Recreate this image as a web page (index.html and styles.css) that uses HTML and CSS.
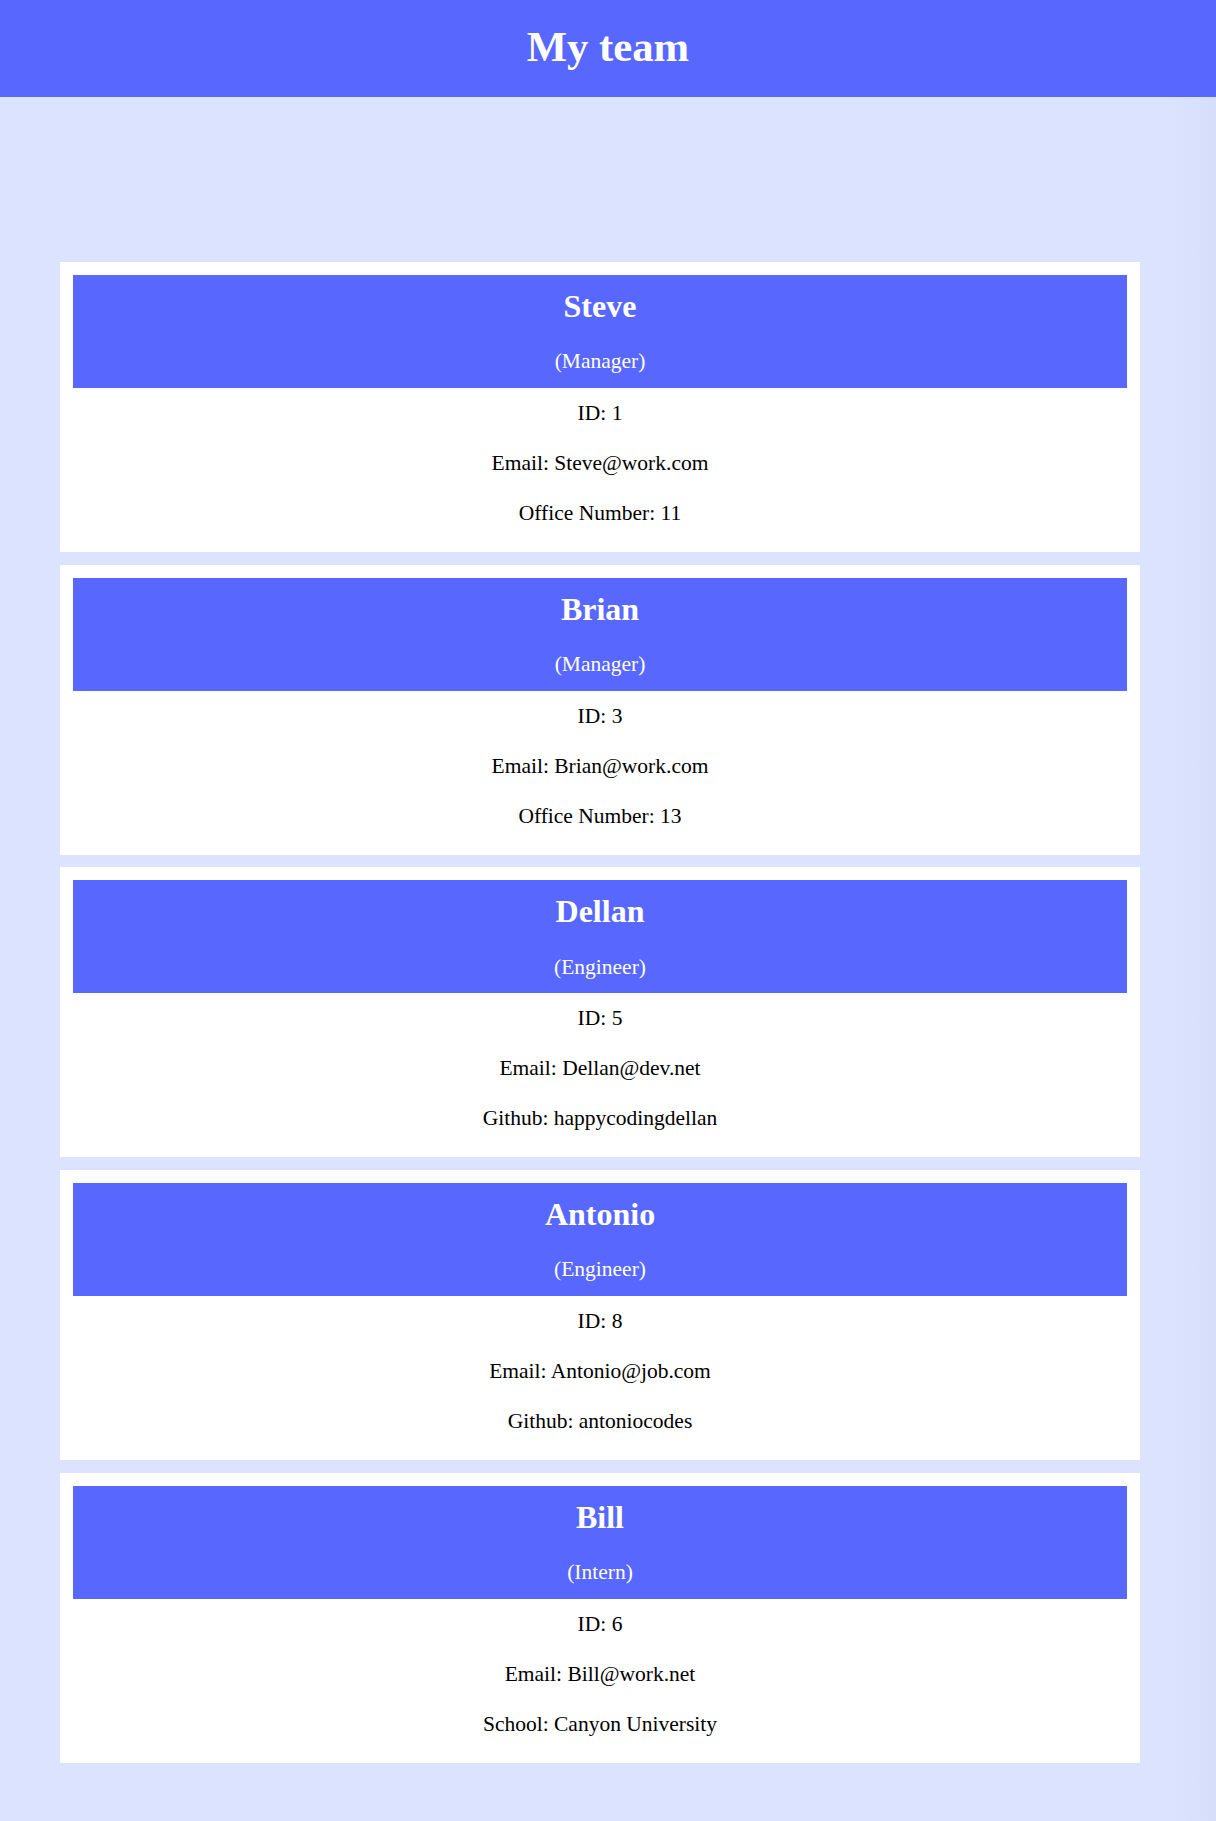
FILE: index.html
```html
<!DOCTYPE html>
<html lang="en">
<head>
<meta charset="utf-8">
<title>My team</title>
<link rel="stylesheet" href="styles.css">
</head>
<body>
<header class="top">
  <h1 class="top-title">My team</h1>
</header>
<main class="team">
  <section class="card">
    <div class="card-head">
      <h2 class="card-name">Steve</h2>
      <p class="card-role">(Manager)</p>
    </div>
    <div class="card-body">
      <p class="card-line">ID: 1</p>
      <p class="card-line">Email: Steve@work.com</p>
      <p class="card-line">Office Number: 11</p>
    </div>
  </section>
  <section class="card">
    <div class="card-head">
      <h2 class="card-name">Brian</h2>
      <p class="card-role">(Manager)</p>
    </div>
    <div class="card-body">
      <p class="card-line">ID: 3</p>
      <p class="card-line">Email: Brian@work.com</p>
      <p class="card-line">Office Number: 13</p>
    </div>
  </section>
  <section class="card">
    <div class="card-head">
      <h2 class="card-name">Dellan</h2>
      <p class="card-role">(Engineer)</p>
    </div>
    <div class="card-body">
      <p class="card-line">ID: 5</p>
      <p class="card-line">Email: Dellan@dev.net</p>
      <p class="card-line">Github: happycodingdellan</p>
    </div>
  </section>
  <section class="card">
    <div class="card-head">
      <h2 class="card-name">Antonio</h2>
      <p class="card-role">(Engineer)</p>
    </div>
    <div class="card-body">
      <p class="card-line">ID: 8</p>
      <p class="card-line">Email: Antonio@job.com</p>
      <p class="card-line">Github: antoniocodes</p>
    </div>
  </section>
  <section class="card">
    <div class="card-head">
      <h2 class="card-name">Bill</h2>
      <p class="card-role">(Intern)</p>
    </div>
    <div class="card-body">
      <p class="card-line">ID: 6</p>
      <p class="card-line">Email: Bill@work.net</p>
      <p class="card-line">School: Canyon University</p>
    </div>
  </section>
</main>
</body>
</html>
```
FILE: styles.css
```css
html {
  background: linear-gradient(to right, #dce3ff 0, #dce3ff 1170px, #d7def9 1216px);
  min-height: 100%;
}
body {
  margin: 0;
  font-family: "Liberation Serif", "Times New Roman", serif;
  color: #000;
}
.top {
  background: #5868ff;
  height: 97px;
  text-align: center;
}
.top-title {
  margin: 0;
  color: #fff;
  font-size: 42.7px;
  font-weight: bold;
  line-height: 93px;
}
.team {
  display: flex;
  flex-direction: column;
  gap: 12.7px;
  padding: 165px 76px 0 60px;
}
.card {
  background: #fff;
  padding: 13px 13px 14px;
  text-align: center;
}
.card-head {
  background: #5868ff;
  color: #fff;
  padding: 13px 0 13.8px;
}
.card-name {
  margin: 0;
  font-size: 32px;
  font-weight: bold;
  line-height: 36px;
}
.card-role {
  margin: 25.2px 0 0;
  font-size: 21.5px;
  line-height: 25px;
}
.card-line {
  margin: 0;
  font-size: 21.5px;
  line-height: 50px;
}
```
